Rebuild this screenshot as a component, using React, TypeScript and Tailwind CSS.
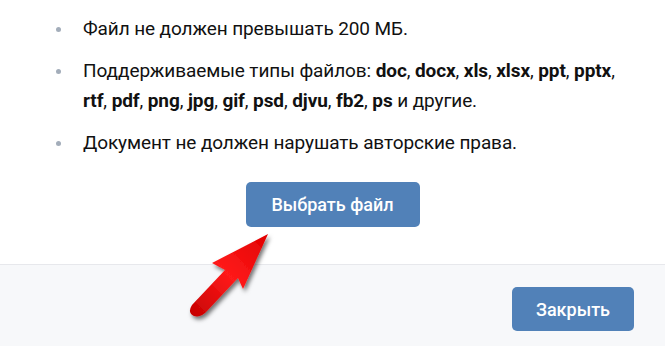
export default function App() {
  const items = [
    <>Файл не должен превышать 200 МБ.</>,
    <>
      Поддерживаемые типы файлов: <b>doc</b>, <b>docx</b>, <b>xls</b>, <b>xlsx</b>, <b>ppt</b>, <b>pptx</b>,{" "}
      <b>rtf</b>, <b>pdf</b>, <b>png</b>, <b>jpg</b>, <b>gif</b>, <b>psd</b>, <b>djvu</b>, <b>fb2</b>, <b>ps</b> и другие.
    </>,
    <>Документ не должен нарушать авторские права.</>,
  ];

  return (
    <div className="relative h-[346px] w-[665px] overflow-hidden bg-white font-['Roboto',sans-serif] text-[#111]">
      {/* Body */}
      <div className="flex h-[265px] flex-col border-b border-[#e7e8ec]">
        <ul className="flex flex-col gap-[12px] pt-[14px] pl-[56px] pr-[30px]">
          {items.map((content, i) => (
            <li key={i} className="flex text-[19px] leading-[30px] tracking-[-0.1px]">
              <span className="mt-[13px] mr-[22px] h-[5px] w-[5px] shrink-0 rounded-full bg-[#a3adba]" />
              <span>{content}</span>
            </li>
          ))}
        </ul>
        <div className="mt-[24px] flex justify-center">
          <button className="h-[45px] w-[174px] rounded-[5px] bg-[#5181b8] text-[18px] font-medium text-white">
            Выбрать файл
          </button>
        </div>
      </div>

      {/* Footer */}
      <div className="flex h-[81px] items-start justify-end bg-[#f7f8fa] pt-[22px] pr-[31px]">
        <button className="h-[44px] w-[122px] rounded-[5px] bg-[#5181b8] text-[18px] font-medium text-white">
          Закрыть
        </button>
      </div>

      {/* Red arrow pointer */}
      <svg
        className="pointer-events-none absolute left-[180px] top-[225px]"
        width="100"
        height="100"
        viewBox="0 0 100 100"
      >
        <defs>
          <linearGradient id="arrowGrad" x1="0" y1="1" x2="1" y2="0">
            <stop offset="0" stopColor="#c40000" />
            <stop offset="0.5" stopColor="#ff1a1a" />
            <stop offset="1" stopColor="#e00000" />
          </linearGradient>
          <filter id="arrowShadow" x="-30%" y="-30%" width="160%" height="160%">
            <feDropShadow dx="2" dy="3" stdDeviation="2" floodColor="#000" floodOpacity="0.55" />
          </filter>
        </defs>
        <path
          d="M88 9 L32 38 L45 45 L12 80 Q7 88 14 91 Q21 93 27 86 L58 53 L63 64 Z"
          fill="url(#arrowGrad)"
          filter="url(#arrowShadow)"
        />
      </svg>
    </div>
  );
}
